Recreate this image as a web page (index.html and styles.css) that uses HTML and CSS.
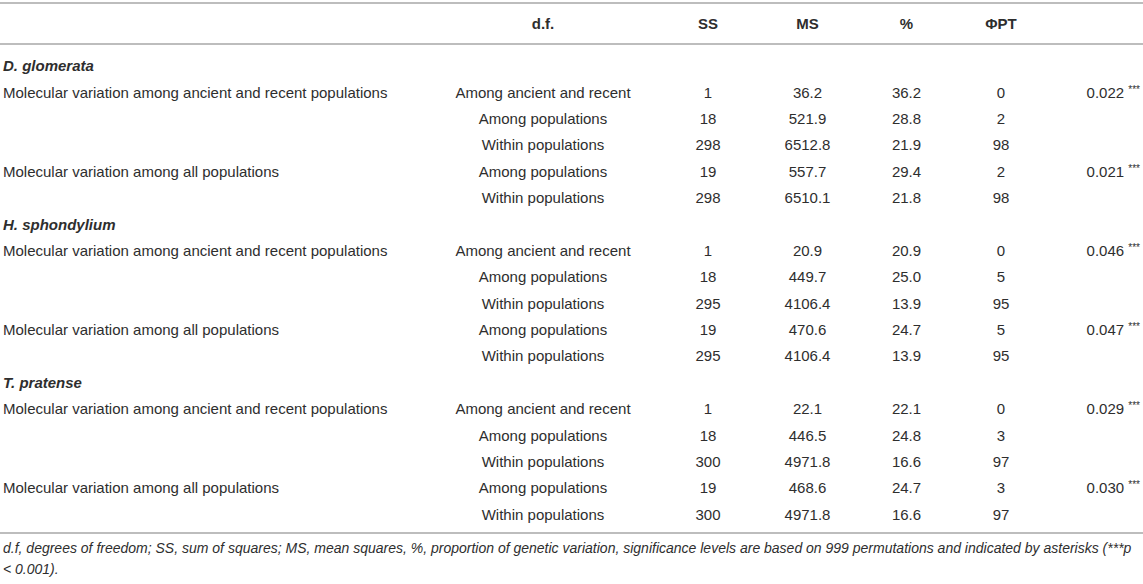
FILE: index.html
```html
<!DOCTYPE html>
<html lang="en">
<head>
<meta charset="utf-8">
<title>AMOVA table</title>
<link rel="stylesheet" href="styles.css">
</head>
<body>
<div class="wrap">
<table class="amova">
<colgroup>
<col class="c-label"><col class="c-src"><col class="c-df"><col class="c-ss"><col class="c-ms"><col class="c-pct"><col class="c-phi">
</colgroup>
<thead>
<tr><th></th><th>d.f.</th><th>SS</th><th>MS</th><th>%</th><th>ΦPT</th><th></th></tr>
</thead>
<tbody>
<tr class="group first"><td colspan="7">D. glomerata</td></tr>
<tr><td>Molecular variation among ancient and recent populations</td><td>Among ancient and recent</td><td>1</td><td>36.2</td><td>36.2</td><td>0</td><td class="p">0.022 <sup>***</sup></td></tr>
<tr><td></td><td>Among populations</td><td>18</td><td>521.9</td><td>28.8</td><td>2</td><td class="p"></td></tr>
<tr><td></td><td>Within populations</td><td>298</td><td>6512.8</td><td>21.9</td><td>98</td><td class="p"></td></tr>
<tr><td>Molecular variation among all populations</td><td>Among populations</td><td>19</td><td>557.7</td><td>29.4</td><td>2</td><td class="p">0.021 <sup>***</sup></td></tr>
<tr><td></td><td>Within populations</td><td>298</td><td>6510.1</td><td>21.8</td><td>98</td><td class="p"></td></tr>
<tr class="group"><td colspan="7">H. sphondylium</td></tr>
<tr><td>Molecular variation among ancient and recent populations</td><td>Among ancient and recent</td><td>1</td><td>20.9</td><td>20.9</td><td>0</td><td class="p">0.046 <sup>***</sup></td></tr>
<tr><td></td><td>Among populations</td><td>18</td><td>449.7</td><td>25.0</td><td>5</td><td class="p"></td></tr>
<tr><td></td><td>Within populations</td><td>295</td><td>4106.4</td><td>13.9</td><td>95</td><td class="p"></td></tr>
<tr><td>Molecular variation among all populations</td><td>Among populations</td><td>19</td><td>470.6</td><td>24.7</td><td>5</td><td class="p">0.047 <sup>***</sup></td></tr>
<tr><td></td><td>Within populations</td><td>295</td><td>4106.4</td><td>13.9</td><td>95</td><td class="p"></td></tr>
<tr class="group"><td colspan="7">T. pratense</td></tr>
<tr><td>Molecular variation among ancient and recent populations</td><td>Among ancient and recent</td><td>1</td><td>22.1</td><td>22.1</td><td>0</td><td class="p">0.029 <sup>***</sup></td></tr>
<tr><td></td><td>Among populations</td><td>18</td><td>446.5</td><td>24.8</td><td>3</td><td class="p"></td></tr>
<tr><td></td><td>Within populations</td><td>300</td><td>4971.8</td><td>16.6</td><td>97</td><td class="p"></td></tr>
<tr><td>Molecular variation among all populations</td><td>Among populations</td><td>19</td><td>468.6</td><td>24.7</td><td>3</td><td class="p">0.030 <sup>***</sup></td></tr>
<tr class="last"><td></td><td>Within populations</td><td>300</td><td>4971.8</td><td>16.6</td><td>97</td><td class="p"></td></tr>
</tbody>
</table>
<p class="note">d.f, degrees of freedom; SS, sum of squares; MS, mean squares, %, proportion of genetic variation, significance levels are based on 999 permutations and indicated by asterisks (***p &lt; 0.001).</p>
</div>
</body>
</html>
```
FILE: styles.css
```css
html, body {
  margin: 0;
  padding: 0;
  background: #fff;
}
body {
  font-family: "Liberation Sans", Arial, sans-serif;
  color: #2e2e2e;
}
.wrap {
  padding-top: 2px;
}
.amova {
  width: 1143px;
  table-layout: fixed;
  border-collapse: collapse;
  font-size: 15px;
}
.c-label { width: 428px; }
.c-src { width: 230px; }
.c-df { width: 100px; }
.c-ss { width: 99px; }
.c-ms { width: 99px; }
.c-pct { width: 90px; }
.c-phi { width: 97px; }

.amova thead tr {
  border-top: 2px solid #bdbdbd;
  border-bottom: 2px solid #bdbdbd;
}
.amova th {
  height: 39px;
  padding: 0 3px;
  font-weight: bold;
  text-align: center;
  vertical-align: middle;
}
.amova td {
  height: 26.4px;
  padding: 0 3px;
  line-height: 18px;
  text-align: center;
  white-space: nowrap;
  vertical-align: middle;
}
.amova td:first-child {
  text-align: left;
}
.amova td.p {
  text-align: right;
}
.amova tr.group td {
  font-weight: bold;
  font-style: italic;
}
.amova tr.first td {
  padding-top: 8px;
}
.amova tr.last td {
  padding-bottom: 4px;
}
.amova tbody tr.last {
  border-bottom: 2px solid #bdbdbd;
}
.amova sup {
  font-size: 10px;
  line-height: 0;
  vertical-align: 5px;
}
.note {
  margin: 4px 0 0;
  padding: 0 3px;
  font-size: 14px;
  line-height: 21px;
  font-style: italic;
}
```
